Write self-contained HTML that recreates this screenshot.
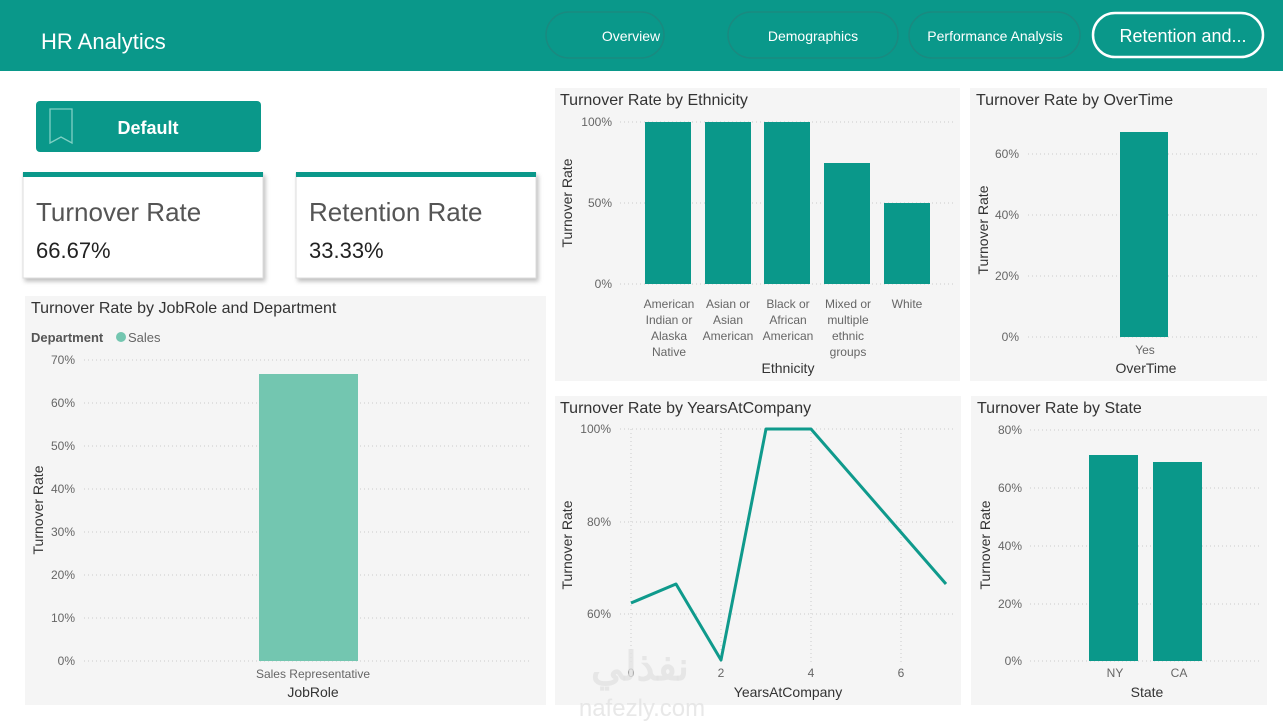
<!DOCTYPE html>
<html><head><meta charset="utf-8"><style>
html,body{margin:0;padding:0;width:1283px;height:721px;overflow:hidden;background:#fff;font-family:"Liberation Sans",sans-serif}
svg{display:block}
text{font-family:"Liberation Sans","Noto Sans CJK SC",sans-serif}
.t{font-size:16px;fill:#333}
.ax{font-size:12px;fill:#666}
.at{font-size:14px;fill:#333}
.g{stroke:#ccc;stroke-width:1;stroke-dasharray:1 3}
</style></head><body>
<svg width="1283" height="721" viewBox="0 0 1283 721" xmlns="http://www.w3.org/2000/svg">
<defs><filter id="sh" x="-10%" y="-10%" width="130%" height="130%"><feDropShadow dx="2" dy="3" stdDeviation="2" flood-color="#000" flood-opacity="0.25"/></filter></defs>
<rect x="0" y="0" width="1283" height="71" fill="#0a988a"/>
<text x="41" y="49" font-size="22" fill="#fff" font-family="Liberation Sans">HR Analytics</text>
<rect x="546" y="12" width="118" height="46" rx="23" fill="none" stroke="#1a8a80" stroke-width="1.5"/>
<text x="631" y="41" font-size="14" fill="#fff" text-anchor="middle">Overview</text>
<rect x="728" y="12" width="170" height="46" rx="23" fill="none" stroke="#1a8a80" stroke-width="1.5"/>
<text x="813" y="41" font-size="14" fill="#fff" text-anchor="middle">Demographics</text>
<rect x="909" y="12" width="171" height="46" rx="23" fill="none" stroke="#1a8a80" stroke-width="1.5"/>
<text x="995" y="41" font-size="14" fill="#fff" text-anchor="middle">Performance Analysis</text>
<rect x="1093" y="13" width="170" height="44" rx="22" fill="none" stroke="#fff" stroke-width="2.5"/>
<text x="1183" y="42" font-size="18" fill="#fff" text-anchor="middle">Retention and...</text>
<rect x="36" y="101" width="225" height="51" rx="4" fill="#0a988a"/>
<path d="M50 109 V143 L61 137 L72 143 V109 Z" fill="none" stroke="#7fd0c4" stroke-width="1.3"/>
<text x="148" y="134" font-size="18" font-weight="bold" fill="#fff" text-anchor="middle">Default</text>
<rect x="23" y="173" width="240" height="105" fill="#fff" stroke="#ddd" filter="url(#sh)"/>
<rect x="23" y="172" width="240" height="5" fill="#0a988a"/>
<text x="36" y="221" font-size="26" fill="#555">Turnover Rate</text>
<text x="36" y="258" font-size="22" fill="#222">66.67%</text>
<rect x="296" y="173" width="240" height="105" fill="#fff" stroke="#ddd" filter="url(#sh)"/>
<rect x="296" y="172" width="240" height="5" fill="#0a988a"/>
<text x="309" y="221" font-size="26" fill="#555">Retention Rate</text>
<text x="309" y="258" font-size="22" fill="#222">33.33%</text>
<rect x="25" y="296" width="521" height="409" fill="#f5f5f5"/>
<rect x="555" y="88" width="405" height="293" fill="#f5f5f5"/>
<rect x="970" y="88" width="297" height="293" fill="#f5f5f5"/>
<rect x="555" y="396" width="406" height="309" fill="#f5f5f5"/>
<rect x="971" y="396" width="296" height="309" fill="#f5f5f5"/>
<text x="31" y="313" class="t">Turnover Rate by JobRole and Department</text>
<text x="31" y="342" font-size="13" font-weight="bold" fill="#555">Department</text>
<circle cx="121" cy="337" r="5" fill="#73c6b0"/>
<text x="128" y="342" font-size="13" fill="#666">Sales</text>
<g class="ax" text-anchor="end">
<text x="75" y="364">70%</text><text x="75" y="407">60%</text><text x="75" y="450">50%</text><text x="75" y="493">40%</text><text x="75" y="536">30%</text><text x="75" y="579">20%</text><text x="75" y="622">10%</text><text x="75" y="665">0%</text>
</g>
<g class="g"><line x1="84" x2="532" y1="360" y2="360"/><line x1="84" x2="532" y1="403" y2="403"/><line x1="84" x2="532" y1="446" y2="446"/><line x1="84" x2="532" y1="489" y2="489"/><line x1="84" x2="532" y1="532" y2="532"/><line x1="84" x2="532" y1="575" y2="575"/><line x1="84" x2="532" y1="618" y2="618"/><line x1="84" x2="532" y1="661" y2="661"/></g>
<rect x="259" y="374" width="99" height="287" fill="#73c6b0"/>
<text x="313" y="678" class="ax" text-anchor="middle">Sales Representative</text>
<text x="313" y="697" class="at" text-anchor="middle">JobRole</text>
<text transform="translate(43,510) rotate(-90)" class="at" text-anchor="middle" font-size="13">Turnover Rate</text>
<text x="560" y="105" class="t">Turnover Rate by Ethnicity</text>
<g class="ax" text-anchor="end"><text x="612" y="126">100%</text><text x="612" y="207">50%</text><text x="612" y="288">0%</text></g>
<g class="g"><line x1="620" x2="955" y1="122" y2="122"/><line x1="620" x2="955" y1="203" y2="203"/><line x1="620" x2="955" y1="284" y2="284"/></g>
<g fill="#0a988a"><rect x="645" y="122" width="46" height="162"/><rect x="705" y="122" width="46" height="162"/><rect x="764" y="122" width="46" height="162"/><rect x="824" y="163" width="46" height="121"/><rect x="884" y="203" width="46" height="81"/></g>
<g class="ax" text-anchor="middle">
<text x="669" y="308">American</text><text x="669" y="324">Indian or</text><text x="669" y="340">Alaska</text><text x="669" y="356">Native</text>
<text x="728" y="308">Asian or</text><text x="728" y="324">Asian</text><text x="728" y="340">American</text>
<text x="788" y="308">Black or</text><text x="788" y="324">African</text><text x="788" y="340">American</text>
<text x="848" y="308">Mixed or</text><text x="848" y="324">multiple</text><text x="848" y="340">ethnic</text><text x="848" y="356">groups</text>
<text x="907" y="308">White</text>
</g>
<text x="788" y="373" class="at" text-anchor="middle">Ethnicity</text>
<text transform="translate(572,203) rotate(-90)" class="at" text-anchor="middle" font-size="13">Turnover Rate</text>
<text x="976" y="105" class="t">Turnover Rate by OverTime</text>
<g class="ax" text-anchor="end"><text x="1019" y="158">60%</text><text x="1019" y="219">40%</text><text x="1019" y="280">20%</text><text x="1019" y="341">0%</text></g>
<g class="g"><line x1="1028" x2="1260" y1="154" y2="154"/><line x1="1028" x2="1260" y1="215" y2="215"/><line x1="1028" x2="1260" y1="276" y2="276"/><line x1="1028" x2="1260" y1="337" y2="337"/></g>
<rect x="1120" y="132" width="48" height="205" fill="#0a988a"/>
<text x="1145" y="354" class="ax" text-anchor="middle">Yes</text>
<text x="1146" y="373" class="at" text-anchor="middle">OverTime</text>
<text transform="translate(988,230) rotate(-90)" class="at" text-anchor="middle" font-size="13">Turnover Rate</text>
<text x="560" y="413" class="t">Turnover Rate by YearsAtCompany</text>
<g class="ax" text-anchor="end"><text x="611" y="433">100%</text><text x="611" y="526">80%</text><text x="611" y="618">60%</text></g>
<g class="g"><line x1="620" x2="955" y1="429" y2="429"/><line x1="620" x2="955" y1="522" y2="522"/><line x1="620" x2="955" y1="614" y2="614"/><line x1="631" x2="631" y1="429" y2="665"/><line x1="721" x2="721" y1="429" y2="665"/><line x1="811" x2="811" y1="429" y2="665"/><line x1="901" x2="901" y1="429" y2="665"/></g>
<polyline points="631,603 676,584 721,660 766,429 811,429 946,584" fill="none" stroke="#0f9a8c" stroke-width="3" stroke-linejoin="round"/>
<g class="ax" text-anchor="middle"><text x="631" y="677">0</text><text x="721" y="677">2</text><text x="811" y="677">4</text><text x="901" y="677">6</text></g>
<text x="788" y="697" class="at" text-anchor="middle">YearsAtCompany</text>
<text transform="translate(572,545) rotate(-90)" class="at" text-anchor="middle" font-size="13">Turnover Rate</text>
<text x="977" y="413" class="t">Turnover Rate by State</text>
<g class="ax" text-anchor="end"><text x="1022" y="434">80%</text><text x="1022" y="492">60%</text><text x="1022" y="550">40%</text><text x="1022" y="608">20%</text><text x="1022" y="665">0%</text></g>
<g class="g"><line x1="1030" x2="1262" y1="430" y2="430"/><line x1="1030" x2="1262" y1="488" y2="488"/><line x1="1030" x2="1262" y1="546" y2="546"/><line x1="1030" x2="1262" y1="604" y2="604"/><line x1="1030" x2="1262" y1="661" y2="661"/></g>
<rect x="1089" y="455" width="49" height="206" fill="#0a988a"/>
<rect x="1153" y="462" width="49" height="199" fill="#0a988a"/>
<g class="ax" text-anchor="middle"><text x="1115" y="677">NY</text><text x="1179" y="677">CA</text></g>
<text x="1147" y="697" class="at" text-anchor="middle">State</text>
<text transform="translate(990,545) rotate(-90)" class="at" text-anchor="middle" font-size="13">Turnover Rate</text>
<text x="640" y="680" font-size="40" font-weight="bold" fill="#e2e2e2" fill-opacity="0.8" text-anchor="middle" font-family="DejaVu Sans, sans-serif">نفذلي</text>
<text x="642" y="716" font-size="24" fill="#e2e2e2" fill-opacity="0.8" text-anchor="middle">nafezly.com</text>
</svg>
</body></html>
